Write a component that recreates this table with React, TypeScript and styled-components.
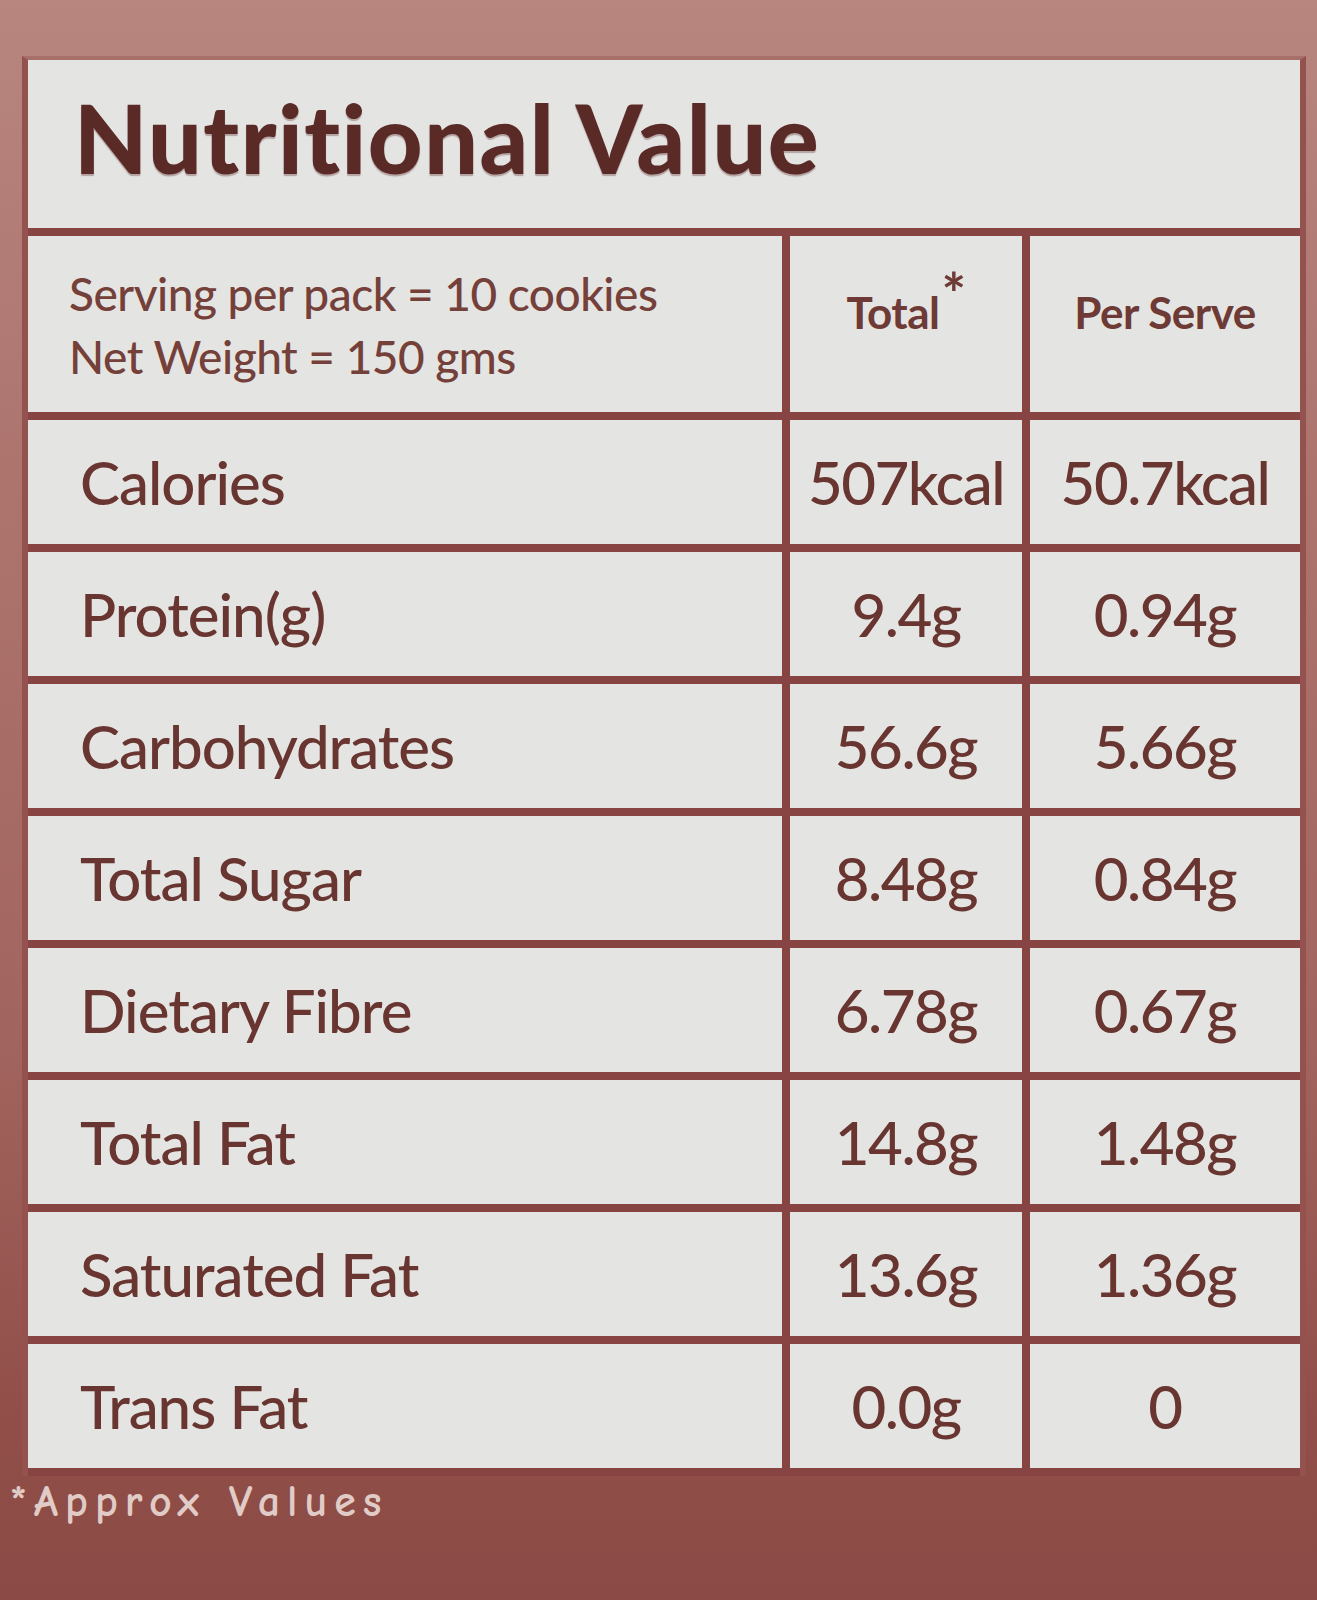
import React from "react";
import styled, { createGlobalStyle } from "styled-components";

const GlobalStyle = createGlobalStyle`
  html, body {
    margin: 0;
    padding: 0;
    background: #a0645e;
  }
  #root {
    min-height: 1600px;
  }
`;

const LINE = "#874442";
const PAPER = "#e4e4e2";

const Page = styled.div`
  min-height: 1600px;
  box-sizing: border-box;
  padding-top: 56px;
  background: linear-gradient(180deg, #b8857f 0%, #ad746e 30%, #a2645e 65%, #924f4a 88%, #8b4a45 100%);
  font-family: Lato, "Open Sans", "Liberation Sans", sans-serif;
`;

const Panel = styled.section`
  margin: 0 11px 0 22px;
  background: ${PAPER};
  border-left: 6px solid #94524e;
  border-right: 6px solid #94524e;
  border-top: 4px solid #a8706a;
`;

const TitleBox = styled.div`
  height: 168px;
  display: flex;
  align-items: center;
  padding: 0 0 0 46px;
  box-sizing: border-box;
`;

const Title = styled.h1`
  margin: -14px 0 0;
  font-family: Lato, "Open Sans", sans-serif;
  font-weight: 900;
  font-size: 95px;
  letter-spacing: 1.5px;
  line-height: 1.1;
  color: #5a2a27;
  text-shadow: 0 2px 1px rgba(90, 42, 39, 0.35);
`;

const Table = styled.div`
  display: grid;
  grid-template-columns: 754px 232px 1fr;
  grid-template-rows: 176px repeat(8, 124px);
  gap: 8px;
  background: ${LINE};
  border-top: 8px solid ${LINE};
  border-bottom: 8px solid ${LINE};
`;

const Cell = styled.div<{ $align?: "left" | "center" }>`
  background: ${PAPER};
  display: flex;
  align-items: center;
  justify-content: ${(p) => (p.$align === "center" ? "center" : "flex-start")};
  padding-left: ${(p) => (p.$align === "center" ? "0" : "52px")};
  font-size: 60px;
  font-weight: 500;
  line-height: 1.2;
  letter-spacing: ${(p) => (p.$align === "center" ? "-1.5px" : "-1px")};
  color: #693530;
  white-space: nowrap;
  overflow: hidden;
`;

const InfoCell = styled.div`
  background: ${PAPER};
  padding: 26px 0 0 41px;
  font-size: 46px;
  font-weight: 500;
  line-height: 63px;
  letter-spacing: -0.5px;
  color: #744039;
  white-space: nowrap;
`;

const HeadCell = styled.div`
  background: ${PAPER};
  display: flex;
  justify-content: center;
  align-items: flex-start;
  padding-top: 50px;
  font-size: 44px;
  line-height: 1.2;
  font-weight: 700;
  letter-spacing: -0.5px;
  color: #6e3a35;
  white-space: nowrap;
`;

const Star = styled.span`
  font-size: 58px;
  font-weight: 700;
  line-height: 1;
  margin: -22px 0 0 2px;
`;

const Note = styled.p`
  margin: 0;
  padding-left: 10px;
  font-family: "Comic Neue", "DejaVu Sans", sans-serif;
  font-weight: 700;
  font-size: 44px;
  letter-spacing: 7px;
  color: #e9d9d4;
  opacity: 0.9;
`;

const rows: [string, string, string][] = [
  ["Calories", "507kcal", "50.7kcal"],
  ["Protein(g)", "9.4g", "0.94g"],
  ["Carbohydrates", "56.6g", "5.66g"],
  ["Total Sugar", "8.48g", "0.84g"],
  ["Dietary Fibre", "6.78g", "0.67g"],
  ["Total Fat", "14.8g", "1.48g"],
  ["Saturated Fat", "13.6g", "1.36g"],
  ["Trans Fat", "0.0g", "0"],
];

export default function App() {
  return (
    <>
      <GlobalStyle />
      <Page>
        <Panel>
          <TitleBox>
            <Title>Nutritional Value</Title>
          </TitleBox>
          <Table>
            <InfoCell>
              Serving per pack = 10 cookies
              <br />
              Net Weight = 150 gms
            </InfoCell>
            <HeadCell>
              Total<Star>*</Star>
            </HeadCell>
            <HeadCell>Per Serve</HeadCell>
            {rows.map(([label, total, per]) => (
              <React.Fragment key={label}>
                <Cell>{label}</Cell>
                <Cell $align="center">{total}</Cell>
                <Cell $align="center">{per}</Cell>
              </React.Fragment>
            ))}
          </Table>
        </Panel>
        <Note>*Approx Values</Note>
      </Page>
    </>
  );
}
